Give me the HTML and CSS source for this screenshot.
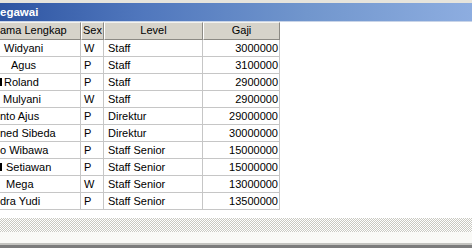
FILE: index.html
```html
<!DOCTYPE html>
<html>
<head>
<meta charset="utf-8">
<link rel="stylesheet" href="styles.css">
</head>
<body>
<div class="window">
  <div class="topstrip"></div>
  <div class="titlebar">egawai</div>
  <div class="grid">
    <div class="row head">
      <div class="cell hname">ama Lengkap</div>
      <div class="cell hc">Sex</div>
      <div class="cell hc">Level</div>
      <div class="cell hc">Gaji</div>
    </div>
    <div class="row"><div class="cell name i4">Widyani</div><div class="cell sex">W</div><div class="cell lvl">Staff</div><div class="cell num">3000000</div></div>
    <div class="row"><div class="cell name i11">Agus</div><div class="cell sex">P</div><div class="cell lvl">Staff</div><div class="cell num">3100000</div></div>
    <div class="row"><div class="cell name i4 sliver">Roland</div><div class="cell sex">P</div><div class="cell lvl">Staff</div><div class="cell num">2900000</div></div>
    <div class="row"><div class="cell name i3">Mulyani</div><div class="cell sex">W</div><div class="cell lvl">Staff</div><div class="cell num">2900000</div></div>
    <div class="row"><div class="cell name i0">nto Ajus</div><div class="cell sex">P</div><div class="cell lvl">Direktur</div><div class="cell num">29000000</div></div>
    <div class="row"><div class="cell name i0">ned Sibeda</div><div class="cell sex">P</div><div class="cell lvl">Direktur</div><div class="cell num">30000000</div></div>
    <div class="row"><div class="cell name i0">o Wibawa</div><div class="cell sex">P</div><div class="cell lvl">Staff Senior</div><div class="cell num">15000000</div></div>
    <div class="row"><div class="cell name i6 sliver">Setiawan</div><div class="cell sex">P</div><div class="cell lvl">Staff Senior</div><div class="cell num">15000000</div></div>
    <div class="row"><div class="cell name i6">Mega</div><div class="cell sex">W</div><div class="cell lvl">Staff Senior</div><div class="cell num">13000000</div></div>
    <div class="row"><div class="cell name i0">dra Yudi</div><div class="cell sex">P</div><div class="cell lvl">Staff Senior</div><div class="cell num">13500000</div></div>
  </div>
  <div class="gap"></div>
  <div class="checker"></div>
  <div class="offwhite"></div>
  <div class="line1"></div>
  <div class="line2"></div>
</div>
</body>
</html>
```
FILE: styles.css
```css
html, body {
  margin: 0;
  padding: 0;
  background: #ffffff;
}
body {
  width: 472px;
  height: 248px;
  overflow: hidden;
  font-family: "Liberation Sans", Arial, sans-serif;
  font-size: 11px;
  color: #000;
}
.window {
  display: flex;
  flex-direction: column;
}
.topstrip {
  height: 3px;
  background: #e6e4dc;
}
.titlebar {
  height: 19px;
  line-height: 18px;
  background: linear-gradient(to right, #2e55a2 0%, #5077bd 30%, #7196cd 65%, #8dade0 100%);
  color: #ffffff;
  font-weight: bold;
  font-size: 11.5px;
  padding-left: 0;
  border-bottom: 1px solid #c8d4e8;
  box-sizing: border-box;
}
.grid {
  width: 280px;
  display: flex;
  flex-direction: column;
}
.row {
  display: grid;
  grid-template-columns: 81px 23px 99px 77px;
  height: 17px;
}
.cell {
  box-sizing: border-box;
  border-right: 1px solid #c6c6c6;
  border-bottom: 1px solid #c6c6c6;
  line-height: 16px;
  white-space: nowrap;
  overflow: hidden;
  position: relative;
}
.row.head {
  height: 18px;
}
.head .cell {
  background: #d6d3ca;
  border-right: 1px solid #8c8a84;
  border-bottom: 1px solid #8c8a84;
  border-left: 1px solid #ffffff;
  border-top: 1px solid #f4f3ee;
  line-height: 15px;
}
.head .cell:first-child {
  border-left: none;
}
.hname {
  padding-left: 0;
}
.hc {
  text-align: center;
}
.name.i0 { padding-left: 0; }
.name.i3 { padding-left: 3px; }
.name.i4 { padding-left: 4px; }
.name.i6 { padding-left: 6px; }
.name.i11 { padding-left: 11px; }
.sliver::before {
  content: "";
  position: absolute;
  left: 0;
  top: 4px;
  width: 2px;
  height: 8px;
  background: #000;
}
.sex {
  padding-left: 3px;
}
.lvl {
  padding-left: 4px;
}
.num {
  text-align: right;
  padding-right: 1px;
}
.gap {
  height: 8px;
}
.checker {
  height: 14px;
  background: repeating-conic-gradient(#c9c9c1 0 25%, #ffffff 0 50%) 0 0 / 2px 2px;
}
.offwhite {
  height: 11px;
  background: #f9f9f6;
}
.line1 {
  height: 2px;
  background: #c4c4c0;
}
.line2 {
  height: 3px;
  background: #7c7c7c;
}
```
